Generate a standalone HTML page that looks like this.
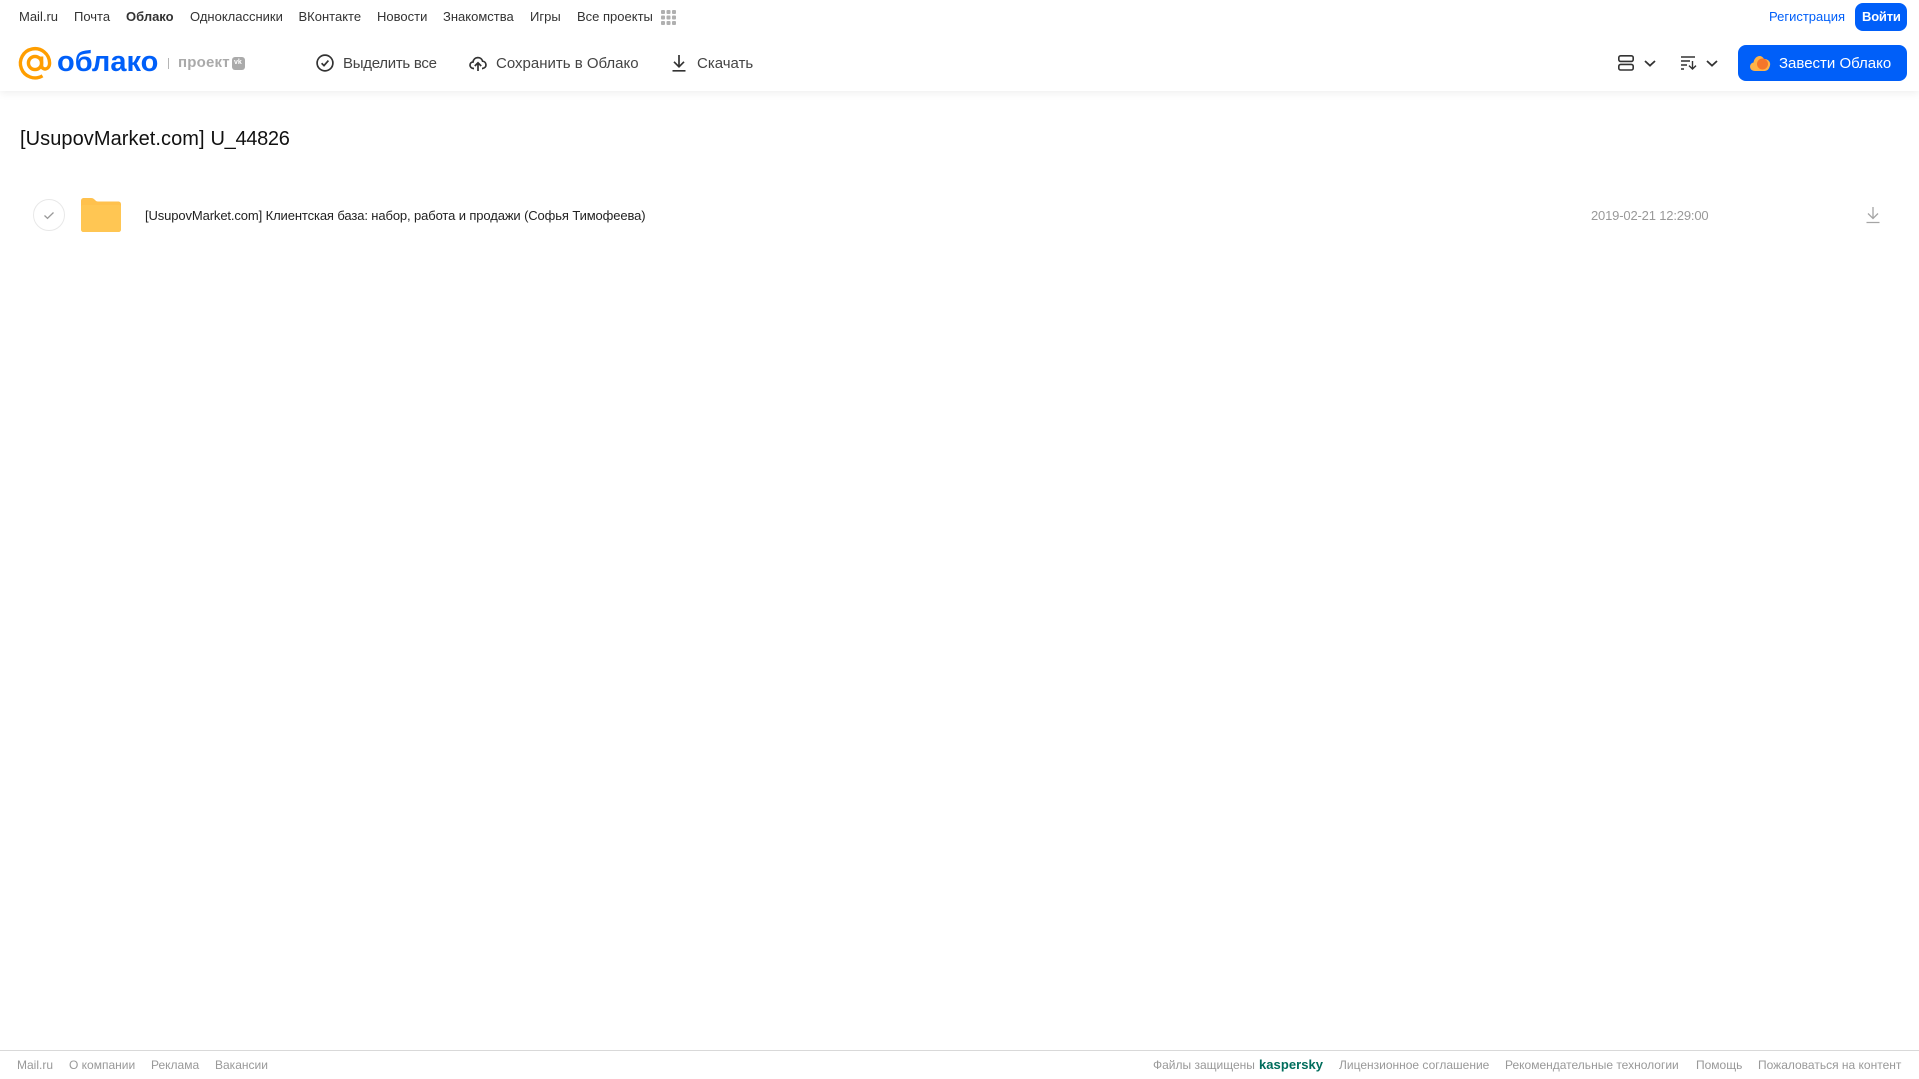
<!DOCTYPE html>
<html lang="ru"><head><meta charset="utf-8"><title>Облако</title>
<style>
html,body{margin:0;padding:0;background:#fff;width:1919px;height:1079px;overflow:hidden}
body{position:relative;font-family:"Liberation Sans",sans-serif}
.t{position:absolute;white-space:nowrap;line-height:20px}
.n{top:7px;font-size:13px;color:#333}
.b{top:54px;font-size:15px;color:#444}
.f{top:1055px;font-size:12px;color:#999}
svg{position:absolute;overflow:visible}
#head{position:absolute;left:0;top:0;width:1919px;height:91px;background:#fff;box-shadow:0 2px 8px rgba(0,0,0,.07)}
</style></head><body>
<div id="head"></div>
<span class="t n" style="left:19px">Mail.ru</span>
<span class="t n" style="left:74px">Почта</span>
<span class="t n" style="left:126px;font-weight:bold">Облако</span>
<span class="t n" style="left:190px">Одноклассники</span>
<span class="t n" style="left:298.5px">ВКонтакте</span>
<span class="t n" style="left:377px">Новости</span>
<span class="t n" style="left:443px">Знакомства</span>
<span class="t n" style="left:530px">Игры</span>
<span class="t n" style="left:577px">Все проекты</span>
<svg style="left:661px;top:10px" width="15" height="15" fill="#b0b0b0"><rect width="4" height="4" rx="1"/><rect x="5.5" width="4" height="4" rx="1"/><rect x="11" width="4" height="4" rx="1"/><rect y="5.5" width="4" height="4" rx="1"/><rect x="5.5" y="5.5" width="4" height="4" rx="1"/><rect x="11" y="5.5" width="4" height="4" rx="1"/><rect y="11" width="4" height="4" rx="1"/><rect x="5.5" y="11" width="4" height="4" rx="1"/><rect x="11" y="11" width="4" height="4" rx="1"/></svg>
<span class="t n" style="left:1769px;color:#005ff9">Регистрация</span>
<div style="position:absolute;left:1855px;top:3px;width:52px;height:28px;border-radius:8px;background:#005ff9"></div>
<span class="t n" style="left:1862px;color:#fff;font-weight:bold;font-size:13px;letter-spacing:-.2px">Войти</span>

<svg style="left:19px;top:47px" width="33" height="33" viewBox="0 0 33 33" fill="none" stroke="#ff9e00" stroke-width="3.4"><circle cx="16" cy="16" r="6.6"/><path d="M22.6 9.5V18.5C22.6 23.5 30.6 23.5 30.6 16A14.6 14.6 0 1 0 23.5 28.8"/></svg>
<span class="t" style="left:57px;top:46px;font-size:29px;line-height:32px;color:#005ff9;font-weight:bold">облако</span>
<div style="position:absolute;left:168px;top:58px;width:1px;height:11px;background:#b5b5b5"></div>
<span class="t" style="left:178px;top:53px;font-size:15px;font-weight:bold;color:#aaa;letter-spacing:.2px">проект</span>
<div style="position:absolute;left:232px;top:57px;width:13px;height:13px;border-radius:3px;background:#aaa"></div>
<span class="t" style="left:234px;top:53px;font-size:7px;font-weight:bold;color:#fff">vk</span>

<svg style="left:316px;top:54px" width="18" height="18" viewBox="0 0 18 18" fill="none" stroke="#333" stroke-width="1.7"><circle cx="9" cy="9" r="7.9"/><path d="M5.6 9.3L8 11.6L12.4 6.6"/></svg>
<span class="t b" style="left:343px;letter-spacing:-.28px">Выделить все</span>
<svg style="left:469px;top:54px" width="18" height="18" viewBox="0 0 18 18" fill="none" stroke="#333" stroke-width="1.7"><path d="M5 14.5H4.5C-0.2 14 0 8.2 4 8C4.8 2.3 12.4 2.3 13.6 7.2C17.8 7.6 18.4 13.8 13.5 14.5H13M9 17V9M5.8 12L9 8.8L12.2 12"/></svg>
<span class="t b" style="left:496px">Сохранить в Облако</span>
<svg style="left:671px;top:54px" width="16" height="18" viewBox="0 0 16 18" fill="none" stroke="#333" stroke-width="1.7"><path d="M8 1V12.5M3 7.8L8 12.8L13 7.8M1.5 16.8H14.5"/></svg>
<span class="t b" style="left:697px">Скачать</span>

<svg style="left:1618px;top:55px" width="16" height="16" viewBox="0 0 16 16" fill="none" stroke="#333" stroke-width="1.6"><rect x=".8" y=".8" width="14.4" height="5.6" rx="1.8"/><rect x=".8" y="9.4" width="14.4" height="5.6" rx="1.8"/></svg>
<svg style="left:1644px;top:60px" width="12" height="7" viewBox="0 0 12 7" fill="none" stroke="#333" stroke-width="1.8"><path d="M1 1L6 5.6L11 1"/></svg>
<svg style="left:1681px;top:56px" width="16" height="14" viewBox="0 0 16 14" fill="none" stroke="#333" stroke-width="1.4"><path d="M0 1H14M0 5H9M0 9H6M0 13H3M11.5 5V13M8 9.6L11.5 13L15 9.6"/></svg>
<svg style="left:1706px;top:60px" width="12" height="7" viewBox="0 0 12 7" fill="none" stroke="#333" stroke-width="1.8"><path d="M1 1L6 5.6L11 1"/></svg>

<div style="position:absolute;left:1738px;top:45px;width:169px;height:36px;border-radius:8px;background:#005ff9"></div>
<svg style="left:1750px;top:55px" width="20" height="16" viewBox="0 0 20 16"><path d="M5 16C-1 16-1.500 8.500 3.500 7.500C4.500 1 11 -1.500 14 4C19 4 21.500 8 19.500 12C18.500 15 16.500 16 14 16Z" fill="#ffb347"/><circle cx="12.500" cy="9" r="5.500" fill="#f5762a"/></svg>
<span class="t" style="left:1779px;top:54px;font-size:15px;color:#fff">Завести Облако</span>

<span class="t" style="left:20px;top:126.500px;font-size:20px;line-height:24px;color:#111;letter-spacing:.07px">[UsupovMarket.com]</span>
<span class="t" style="left:210.500px;top:126.500px;font-size:20px;line-height:24px;color:#111;letter-spacing:-.3px">U_44826</span>

<svg style="left:33px;top:199px" width="32" height="32" viewBox="0 0 32 32" fill="none"><circle cx="16" cy="16" r="15.500" stroke="#e8e8e8"/><path d="M11.500 16.500L14.500 19.300L20.500 13.500" stroke="#999" stroke-width="1.300"/></svg>
<svg style="left:81px;top:198px" width="40" height="34" viewBox="0 0 40 34"><path d="M0 3C0 1 1 0 3 0H10C12 0 13 1 14 2C15 3 15.500 3.500 17 3.500H37C39 3.500 40 4.500 40 6.500V31C40 33 39 34 37 34H3C1 34 0 33 0 31Z" fill="#ffc14d"/><path d="M0 9C0 7.500 1 7 2.500 7H37.500C39 7 40 7.500 40 9V31C40 33 39 34 37 34H3C1 34 0 33 0 31Z" fill="#ffc653"/></svg>
<span class="t" style="left:145px;top:205.500px;font-size:13px;letter-spacing:-.115px;color:#222">[UsupovMarket.com] Клиентская база: набор, работа и продажи (Софья Тимофеева)</span>
<span class="t" style="left:1591px;top:205.500px;font-size:13px;letter-spacing:-.17px;color:#999">2019-02-21 12:29:00</span>
<svg style="left:1866px;top:206px" width="14" height="18" viewBox="0 0 14 18" fill="none" stroke="#a5a5a5" stroke-width="1.300"><path d="M7 1V12M2 7.500L7 12.500L12 7.500M.5 16.500H13.500"/></svg>

<div style="position:absolute;left:0;top:1050px;width:1919px;height:1px;background:#d9d9d9"></div>
<span class="t f" style="left:17px">Mail.ru</span>
<span class="t f" style="left:69px">О компании</span>
<span class="t f" style="left:151px">Реклама</span>
<span class="t f" style="left:215px">Вакансии</span>
<span class="t f" style="left:1153px">Файлы защищены</span>
<span class="t f" style="left:1259px;color:#006d5c;font-weight:bold;font-size:13px;letter-spacing:.05px">kaspersky</span>
<span class="t f" style="left:1339px">Лицензионное соглашение</span>
<span class="t f" style="left:1505px">Рекомендательные технологии</span>
<span class="t f" style="left:1696px">Помощь</span>
<span class="t f" style="left:1758px">Пожаловаться на контент</span>
</body></html>
